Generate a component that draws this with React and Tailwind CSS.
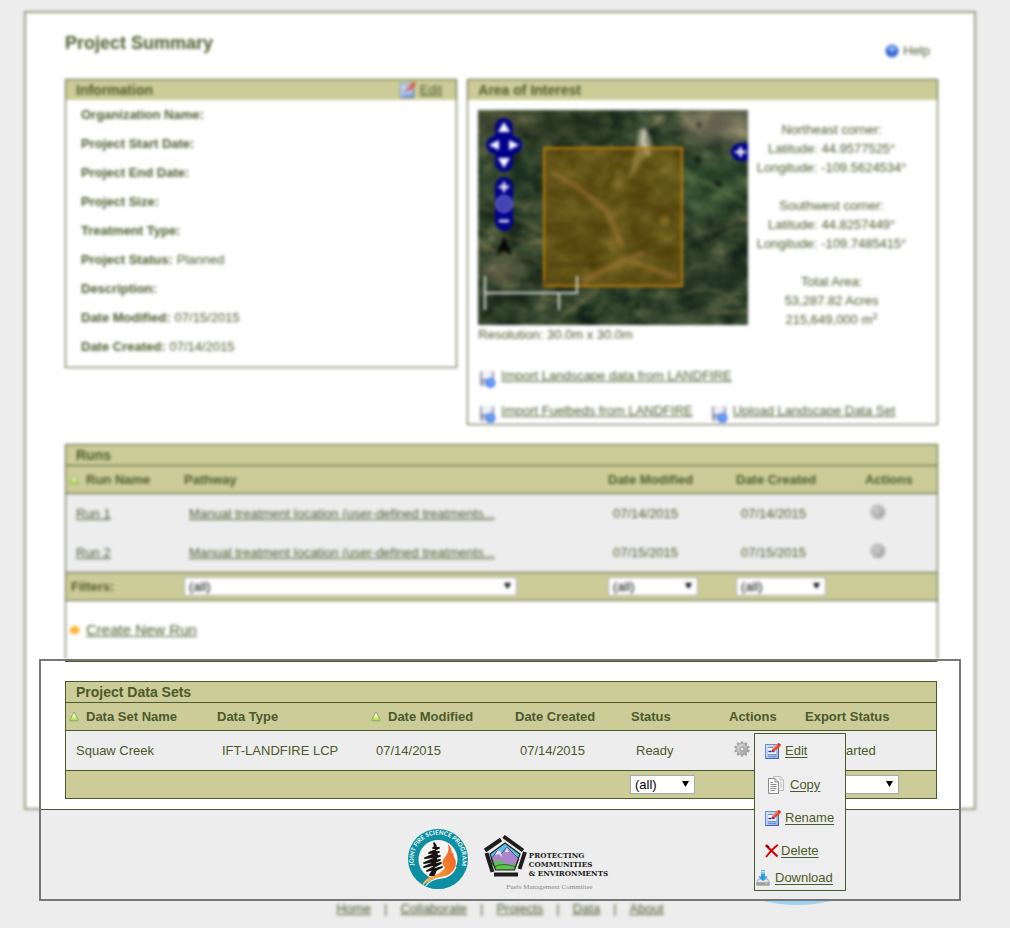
import React from "react";

function SortIcon() {
  return (
    <svg width="10" height="11" viewBox="0 0 10 11" className="shrink-0" aria-hidden="true">
      <defs>
        <linearGradient id="sortFill" x1="0" y1="0" x2="0" y2="1">
          <stop offset="0.3" stopColor="#ffffff" />
          <stop offset="0.8" stopColor="#b9e24f" />
        </linearGradient>
      </defs>
      <path d="M5 1 L9.2 8.6 Q9.5 9.8 8.4 9.8 H1.6 Q.5 9.8 .8 8.6 Z" fill="url(#sortFill)" stroke="#86ab5c" strokeWidth="1" />
    </svg>
  );
}

function EditIcon() {
  return (
    <svg width="16" height="16" viewBox="0 0 16 16" className="shrink-0" aria-hidden="true">
      <defs>
        <linearGradient id="editPage" x1="0" y1="0" x2="1" y2="1">
          <stop offset="0" stopColor="#d5e6fb" />
          <stop offset="1" stopColor="#86aee8" />
        </linearGradient>
      </defs>
      <rect x="0.5" y="1.5" width="13" height="14" fill="url(#editPage)" stroke="#6f8fcb" />
      <path d="M.5 15.5H13.5V3" fill="none" stroke="#4d63a8" />
      <rect x="3" y="4" width="8" height="7" fill="#f2f7ff" />
      <path d="M3 11.500H11M3 13.500H11M3 4.500H8" stroke="#6f8fcb" strokeWidth="1" />
      <path d="M3.500 8.500h3M7.500 8.500h2" stroke="#1c2fb8" strokeWidth="1.600" />
      <path d="M6.600 8.800 L7.400 5.800 L12.600 .8 L15.200 3.400 L9.600 8.200 Z" fill="#e8492a" />
      <path d="M8 6.200 L13 1.600" stroke="#ff9a78" strokeWidth="1" />
      <path d="M12.600 .8 L13.800 0 L16 1.800 L15 3.400 Z" fill="#c92a10" />
      <path d="M6.600 8.800 L7.100 7 L8.400 8.200 Z" fill="#333" />
    </svg>
  );
}

function CopyIcon() {
  return (
    <svg width="18" height="18" viewBox="0 0 18 18" className="shrink-0" aria-hidden="true">
      <path d="M6.500 .5H13l3.500 3.500V14.500H6.500Z" fill="#f4f4f4" stroke="#bdbdbd" />
      <path d="M13 .5V4h3.500M13 7h2M13 9h2M13 11h2" fill="none" stroke="#bdbdbd" />
      <path d="M1.500 2.500H8L11.500 6V17.500H1.500Z" fill="#fafafa" stroke="#8b8b8b" />
      <path d="M8 2.500V6H11.500M3.500 8.500H9.500M3.500 10.500H9.500M3.500 12.500H9.500M3.500 14.500H8M3.500 6.500H6" fill="none" stroke="#8b8b8b" />
    </svg>
  );
}

function DeleteIcon() {
  return (
    <svg width="14" height="14" viewBox="0 0 14 14" className="shrink-0" aria-hidden="true">
      <path d="M1 1.500 L12.500 12.500" stroke="#d40000" strokeWidth="2.200" />
      <path d="M12.800 .8 C8 4.500 4 9 1 13" stroke="#d40000" strokeWidth="1.800" fill="none" />
      <path d="M1 1 L4 3.500" stroke="#8e0000" strokeWidth="2.200" />
    </svg>
  );
}

function DownloadIcon() {
  return (
    <svg width="14" height="16" viewBox="0 0 14 16" className="shrink-0" aria-hidden="true">
      <path d="M2.500 9 L.5 12.500V15.300H13.500V12.500L11.500 9Z" fill="#e2e2e2" stroke="#9a9a9a" strokeWidth=".8" />
      <rect x="1" y="12.300" width="12" height="2.600" fill="#9c9c9c" />
      <rect x="9.500" y="13" width="2" height="1" fill="#a6e86c" />
      <path d="M5 3.500H9V6.500H12L7 11L2 6.500H5Z" fill="#2f9be6" />
      <path d="M5 0H9V1H5ZM5 1.800H9V2.800H5Z" fill="#58b4f0" />
    </svg>
  );
}

const TEETH = [0, 36, 72, 108, 144, 180, 216, 252, 288, 324];

function GearIcon() {
  return (
    <svg width="16" height="16" viewBox="0 0 16 16" className="shrink-0" aria-hidden="true">
      <defs>
        <linearGradient id="gearFill" x1="0" y1="0" x2="1" y2="1">
          <stop offset="0" stopColor="#dedede" />
          <stop offset="1" stopColor="#9d9d9d" />
        </linearGradient>
      </defs>
      {TEETH.map((a) => (
        <rect key={a} x="6.800" y="0.200" width="2.400" height="4" rx="0.600" fill="#a2a2a2" transform={`rotate(${a} 8 8)`} />
      ))}
      <circle cx="8" cy="8" r="5.800" fill="url(#gearFill)" stroke="#999999" strokeWidth=".6" />
      <circle cx="8" cy="8" r="2" fill="#eeeeee" stroke="#8c8c8c" strokeWidth=".8" />
    </svg>
  );
}

function DiskIcon() {
  return (
    <svg width="17" height="18" viewBox="0 0 17 18" className="mt-1 shrink-0" aria-hidden="true">
      <rect x="1" y="1" width="14" height="15" rx="2" fill="#8f93ab" />
      <rect x="3" y="1" width="10" height="8" fill="#f1f1f6" />
      <rect x="4" y="11" width="8" height="5" fill="#c8cbd8" />
      <circle cx="11.500" cy="13" r="5" fill="#4a86ee" />
      <path d="M11.500 10.500V14" fill="none" stroke="#dbe8ff" strokeWidth="1.500" />
    </svg>
  );
}

function HelpIcon() {
  return (
    <svg width="14" height="14" viewBox="0 0 14 14" aria-hidden="true">
      <circle cx="7" cy="7" r="6.500" fill="#2f62d0" />
      <ellipse cx="7" cy="4.500" rx="4.500" ry="3" fill="#6f9cf0" />
      <path d="M5.500 5.500Q5.500 4 7 4T8.500 5.400Q8.500 6.500 7 7.500V8.500M7 9.800V11" stroke="#cfe0ff" strokeWidth="1" fill="none" />
    </svg>
  );
}

function TerrainMap() {
  return (
    <svg viewBox="0 0 270 215" className="block h-[215px] w-[270px] shrink-0" role="img" aria-label="Satellite map of the area of interest">
      <defs>
        <filter id="terrain" x="0" y="0" width="100%" height="100%" colorInterpolationFilters="sRGB">
          <feTurbulence type="fractalNoise" baseFrequency="0.040 0.055" numOctaves="5" seed="7" />
          <feColorMatrix values="1.300 .3 0 0 -.38  1.300 .3 0 0 -.38  1.300 .3 0 0 -.38  0 0 0 0 1" />
          <feComponentTransfer>
            <feFuncR type="table" tableValues=".08 .12 .19 .27 .40 .56" />
            <feFuncG type="table" tableValues=".13 .18 .26 .33 .42 .55" />
            <feFuncB type="table" tableValues=".09 .12 .17 .22 .29 .42" />
          </feComponentTransfer>
        </filter>
        <filter id="soft" x="-30%" y="-30%" width="160%" height="160%">
          <feGaussianBlur stdDeviation="7" />
        </filter>
        <filter id="softer">
          <feGaussianBlur stdDeviation="1.500" />
        </filter>
        <clipPath id="mapClip">
          <rect width="270" height="215" />
        </clipPath>
      </defs>
      <g clipPath="url(#mapClip)">
        <rect width="270" height="215" fill="#374430" />
        <rect width="270" height="215" filter="url(#terrain)" />
        <g filter="url(#soft)">
          <ellipse cx="242" cy="14" rx="40" ry="18" fill="#b09c86" opacity=".5" />
          <ellipse cx="230" cy="75" rx="40" ry="30" fill="#3a6238" opacity=".4" />
          <ellipse cx="90" cy="18" rx="40" ry="16" fill="#1f2d1b" opacity=".5" />
          <ellipse cx="30" cy="70" rx="28" ry="12" fill="#1c3420" opacity=".5" />
          <ellipse cx="225" cy="165" rx="50" ry="22" fill="#1d2f20" opacity=".5" />
          <ellipse cx="22" cy="160" rx="20" ry="10" fill="#9c8468" opacity=".5" />
          <ellipse cx="20" cy="14" rx="30" ry="14" fill="#66583c" opacity=".4" />
        </g>
        <g filter="url(#softer)" fill="none">
          <path d="M0 98Q35 102 64 122M0 118Q40 132 68 134M0 138Q38 145 64 152" stroke="#8a7448" strokeWidth="2" opacity=".5" />
          <path d="M0 108Q45 118 68 127M5 205Q50 168 100 195" stroke="#13200f" strokeWidth="3" opacity=".5" />
          <path d="M178 145Q215 142 230 130T270 113" stroke="#14180f" strokeWidth="2" opacity=".8" />
          <path d="M207 168Q215 145 240 160M205 185Q235 170 262 195" stroke="#7b7951" strokeWidth="2" opacity=".5" />
          <path d="M205 58L222 70L242 80L270 95" stroke="#7a8a50" strokeWidth="2" opacity=".5" />
          <path d="M233 202H270M85 205L120 180" stroke="#8b7b50" strokeWidth="3" opacity=".5" />
          <path d="M218 48l4 4M238 72l5 5M220 14l2 2" stroke="#080c08" strokeWidth="4" />
          <path d="M159 33Q158 18 167 17Q176 30 173 44L164 50L150 72Q156 48 159 33Z" fill="#9ea284" opacity=".8" />
          <path d="M166 20L165 32L171 46" stroke="#e8ded2" strokeWidth="3" />
        </g>
        <rect x="66" y="38" width="138" height="138" fill="#8f6400" fillOpacity=".5" stroke="#bd7d08" strokeWidth="2" />
        <g filter="url(#softer)" fill="none" opacity=".4">
          <path d="M74 62L98 76L128 100L145 138M104 172L130 158L166 142M150 150L200 168" stroke="#b98343" strokeWidth="6" />
          <path d="M70 155H118M68 115Q85 112 94 118" stroke="#3a2c00" strokeWidth="5" />
          <path d="M82 140Q95 120 115 130T105 150Q90 150 82 140" stroke="#4d3900" strokeWidth="3" />
          <path d="M150 96Q170 92 190 105M130 48Q140 65 126 80" stroke="#443500" strokeWidth="4" />
          <circle cx="187" cy="111" r="5" fill="#c5964c" />
        </g>
        <g fill="#00008b">
          <rect x="17" y="8" width="18" height="54" rx="9" />
          <rect x="8" y="26" width="36" height="18" rx="9" />
          <rect x="17" y="67" width="18" height="54" rx="9" />
          <path d="M270 33H262A9 9 0 0 0 262 51H270Z" />
        </g>
        <path d="M26 12L32 22H20ZM26 58L32 48H20ZM11 35L21 30V40ZM41 35L31 30V40Z" fill="#fff" />
        <circle cx="26" cy="94" r="8.500" fill="#4644b4" stroke="#8381d8" />
        <path d="M21 77H31M26 72V82M21 111H31M257 42H268M262.500 37V47" stroke="#fff" strokeWidth="2.600" />
        <path d="M26 126L34 146L26 140L18 146Z" fill="#050805" />
        <path d="M7 166V200M7 183H99V166M81 183V200" fill="none" stroke="#d5d5d5" strokeWidth="2" />
        <text x="41" y="177" fontSize="10" fill="#22251f" fontFamily="Liberation Sans">10 km</text>
        <text x="33" y="197" fontSize="10" fill="#22251f" fontFamily="Liberation Sans">5 mi</text>
      </g>
    </svg>
  );
}

function FireScienceLogo() {
  return (
    <svg width="60" height="60" viewBox="0 0 60 60" role="img" aria-label="Joint Fire Science Program">
      <defs>
        <path id="ring" d="M12.700 47.200A24.400 24.400 0 1 1 47.300 47.200" />
        <linearGradient id="flame" x1="1" y1="0" x2="0" y2="1">
          <stop offset="0" stopColor="#f0552b" />
          <stop offset=".55" stopColor="#f58a2e" />
          <stop offset="1" stopColor="#fdc66b" />
        </linearGradient>
        <clipPath id="disc">
          <circle cx="30" cy="30" r="30" />
        </clipPath>
      </defs>
      <circle cx="30" cy="30" r="30" fill="#0d8fa3" />
      <circle cx="30" cy="30.500" r="19.500" fill="#f4f4f1" />
      <g clipPath="url(#disc)">
        <path d="M13 60Q20 51 34 49Q46 46 50 34L56 44L44 60Z" fill="#0d8fa3" />
        <path d="M14 57Q16 50 24 47Q34 44 37 39Q32 34 37 28Q42 23 40 15Q44 19 43.500 24Q46 23 45.500 27Q50 34 46 41Q42 47 33 48Q22 50 14 57Z" fill="url(#flame)" />
        <path d="M17 58Q22 50 33 49Q44 48 48 38" fill="none" stroke="#fff" strokeWidth="1.200" />
      </g>
      <path d="M26 14L28 17L25 19L31 19L21 24L31 23L17 29L32 27L16 34L32 31L16 38L33 34L19 42L34 38L28 41L26 46H22L25 41L29 26Z" fill="#15120f" stroke="#15120f" strokeWidth="1.800" strokeLinejoin="round" />
      <text fontSize="6" fontWeight="700" fontFamily="Lato, 'Liberation Sans', sans-serif" fill="#fff" textAnchor="middle">
        <textPath href="#ring" startOffset="50%">JOINT FIRE SCIENCE PROGRAM</textPath>
      </text>
    </svg>
  );
}

function PentagonLogo() {
  return (
    <svg width="44" height="42" viewBox="0 0 44 42" role="img" aria-label="Protecting Communities and Environments emblem">
      <path d="M22 8L37 19L31.500 35H12.500L7 19Z" fill="#52c3e8" />
      <path d="M8 24L15 15L18 19L24 12L36 24L32.500 32L10 30Z" fill="#a986c8" stroke="#3a2a4c" strokeWidth=".7" />
      <path d="M15 15L12 20L16 19L19 22L18 17ZM24 12L22 17L26 17Z" fill="#e8dcf2" />
      <path d="M9.500 27Q17 24 23 29T34 26L31.500 35H12.500Z" fill="#5fc24b" />
      <path d="M11 32Q20 27 33 32" fill="none" stroke="#2a6c2c" strokeWidth="1" />
      <path d="M22 8L37 19L31.500 35H12.500L7 19Z" fill="none" stroke="#1d1d1d" strokeWidth="1.200" />
      <path d="M18 4.500L2 15.500M20.500 1.500L40 15.500M42 17L36.500 34M35 39.500H11M3.500 18L9.500 37" fill="none" stroke="#1d1d1d" strokeWidth="4" />
    </svg>
  );
}

function Select({ label, width }) {
  return (
    <span className={`relative inline-flex align-middle ${width}`}>
      <select aria-label={label} className="h-[19px] w-full appearance-none border border-[#a9a9a9] bg-white pl-1 text-[13px] leading-4 text-black outline-none">
        <option>(all)</option>
      </select>
      <svg width="7" height="6" viewBox="0 0 7 6" className="pointer-events-none absolute top-1.5 right-1.5" aria-hidden="true">
        <path d="M0 0H7L3.500 6Z" fill="#000" />
      </svg>
    </span>
  );
}

function PanelTitle({ children }) {
  return <h2 className="text-[14px] leading-5 font-bold">{children}</h2>;
}

const INFO = [
  ["Organization Name:", ""],
  ["Project Start Date:", ""],
  ["Project End Date:", ""],
  ["Project Size:", ""],
  ["Treatment Type:", ""],
  ["Project Status:", "Planned"],
  ["Description:", ""],
  ["Date Modified:", "07/15/2015"],
  ["Date Created:", "07/14/2015"],
];

const RUNS = [
  ["Run 1", "07/14/2015"],
  ["Run 2", "07/15/2015"],
];

const NAV = ["Home", "Collaborate", "Projects", "Data", "About"];

const CELL_HEAD = "border-b border-[#4b5a2a] p-0 text-left font-bold";
const TH_FIRST = `${CELL_HEAD} pl-[3px]`;
const TH = `${CELL_HEAD} pl-1`;
const TD = "p-0 pl-[9px]";

function IconLink({ icon, children }) {
  return (
    <a href="#" className="flex h-[23px] items-start gap-[5px]">
      {icon}
      <span className="leading-5 underline">{children}</span>
    </a>
  );
}

function InformationPanel() {
  return (
    <section className="border border-[#4b5a2a] pb-1.5">
      <div className="flex items-center justify-between bg-[#cccc99] pr-3.5 pl-2.5">
        <PanelTitle>Information</PanelTitle>
        <a href="#" className="flex items-center gap-1 underline">
          <EditIcon />
          Edit
        </a>
      </div>
      <dl className="pl-[15px]">
        {INFO.map(([k, v]) => (
          <div key={k} className="flex h-[29px] items-center gap-1">
            <dt className="font-bold">{k}</dt>
            <dd>{v}</dd>
          </div>
        ))}
      </dl>
    </section>
  );
}

function AreaPanel() {
  return (
    <section className="border border-[#4b5a2a]">
      <div className="bg-[#cccc99] pl-2.5">
        <PanelTitle>Area of Interest</PanelTitle>
      </div>
      <div className="flex pt-2.5 pl-2.5">
        <div>
          <TerrainMap />
          <p className="leading-5">Resolution: 30.0m x 30.0m</p>
        </div>
        <div className="flex flex-1 flex-col gap-[19px] pt-2.5 pr-[22px] text-center leading-[19px] whitespace-nowrap">
          <p>Northeast corner:<br />Latitude: 44.9577525°<br />Longitude: -109.5624534°</p>
          <p>Southwest corner:<br />Latitude: 44.8257449°<br />Longitude: -109.7485415°</p>
          <p>Total Area:<br />53,287.82 Acres<br />215,649,000 m<sup>2</sup></p>
        </div>
      </div>
      <div className="mt-[21px] flex flex-col gap-3 pl-[11px]">
        <IconLink icon={<DiskIcon />}>Import Landscape data from LANDFIRE</IconLink>
        <div className="flex gap-[18px]">
          <IconLink icon={<DiskIcon />}>Import Fuelbeds from LANDFIRE</IconLink>
          <IconLink icon={<DiskIcon />}>Upload Landscape Data Set</IconLink>
        </div>
      </div>
    </section>
  );
}

function RunsPanel() {
  return (
    <section className="mt-[19px] border-x border-t border-[#4b5a2a]">
      <div className="border-b border-[#4b5a2a] bg-[#cccc99] pl-2.5">
        <PanelTitle>Runs</PanelTitle>
      </div>
      <table className="w-full table-fixed border-separate border-spacing-0">
        <colgroup>
          <col className="w-[114px]" />
          <col />
          <col className="w-[128px]" />
          <col className="w-[129px]" />
          <col className="w-[76px]" />
        </colgroup>
        <thead>
          <tr className="h-7 bg-[#cccc99]">
            <th className={TH_FIRST}>
              <span className="flex items-center gap-[7px]"><SortIcon />Run Name</span>
            </th>
            <th className={TH}>Pathway</th>
            <th className={TH}>Date Modified</th>
            <th className={TH}>Date Created</th>
            <th className={TH}>Actions</th>
          </tr>
        </thead>
        <tbody>
          {RUNS.map(([name, date]) => (
            <tr key={name} className="h-[39px] bg-[#ededed]">
              <td className="p-0 pl-2.5"><a href="#" className="underline">{name}</a></td>
              <td className={TD}><a href="#" className="underline">Manual treatment location (user-defined treatments...</a></td>
              <td className={TD}>{date}</td>
              <td className={TD}>{date}</td>
              <td className={TD}>
                <button type="button" aria-label={`Actions for ${name}`} className="block pb-1"><GearIcon /></button>
              </td>
            </tr>
          ))}
        </tbody>
        <tfoot>
          <tr className="h-[29px] bg-[#cccc99]">
            <th className="border-y border-[#4b5a2a] p-0 pl-[5px] text-left font-bold">Filters:</th>
            <td className="border-y border-[#4b5a2a] p-0 pl-1"><Select label="Filter by pathway" width="w-[333px]" /></td>
            <td className="border-y border-[#4b5a2a] p-0 pl-1"><Select label="Filter by date modified" width="w-[90px]" /></td>
            <td className="border-y border-[#4b5a2a] p-0 pl-1"><Select label="Filter by date created" width="w-[90px]" /></td>
            <td className="border-y border-[#4b5a2a] p-0" />
          </tr>
        </tfoot>
      </table>
      <div className="flex h-[58px] items-center gap-[5px] pl-[3px]">
        <svg width="12" height="12" viewBox="0 0 12 12" aria-hidden="true">
          <path d="M1 4H6V1L11.500 6L6 11V9H1Z" fill="#f5a81c" />
          <circle cx="6" cy="6" r="4" fill="#fbb62c" />
        </svg>
        <a href="#" className="text-[15px] underline">Create New Run</a>
      </div>
    </section>
  );
}

function MenuItem({ icon, inset, gap, height, children }) {
  return (
    <li>
      <a href="#" className={`flex items-center ${inset} ${gap} ${height}`}>
        {icon}
        <span className="underline underline-offset-2">{children}</span>
      </a>
    </li>
  );
}

function ActionsMenu() {
  return (
    <ul className="absolute top-0.5 left-[29px] z-10 w-[92px] border border-[#4b5a2a] bg-[#eeeeee] pb-px">
      <MenuItem icon={<EditIcon />} inset="pl-2.5" gap="gap-1" height="h-[34px]">Edit</MenuItem>
      <MenuItem icon={<CopyIcon />} inset="pl-3" gap="gap-[5px]" height="h-[33px]">Copy</MenuItem>
      <MenuItem icon={<EditIcon />} inset="pl-2.5" gap="gap-1" height="h-[33px]">Rename</MenuItem>
      <MenuItem icon={<DeleteIcon />} inset="pl-2.5" gap="gap-0.5" height="h-[33px]">Delete</MenuItem>
      <MenuItem icon={<DownloadIcon />} inset="pl-px" gap="gap-[5px]" height="h-[22px]">Download</MenuItem>
    </ul>
  );
}

function DataSetsPanel() {
  const foot = "border-t border-[#4b5a2a] p-0 pl-[3px]";
  return (
    <section className="border border-[#4b5a2a]">
      <div className="border-b border-[#4b5a2a] bg-[#cccc99] pl-2.5">
        <PanelTitle>Project Data Sets</PanelTitle>
      </div>
      <table className="w-full table-fixed border-separate border-spacing-0">
        <colgroup>
          <col className="w-[147px]" />
          <col />
          <col className="w-[144px]" />
          <col className="w-[116px]" />
          <col className="w-[98px]" />
          <col className="w-[76px]" />
          <col className="w-[135px]" />
        </colgroup>
        <thead>
          <tr className="h-7 bg-[#cccc99]">
            <th className={TH_FIRST}>
              <span className="flex items-center gap-[7px]"><SortIcon />Data Set Name</span>
            </th>
            <th className={TH}>Data Type</th>
            <th className={TH}>
              <span className="flex items-center gap-[7px]"><SortIcon />Date Modified</span>
            </th>
            <th className={TH}>Date Created</th>
            <th className={TH}>Status</th>
            <th className={TH}>Actions</th>
            <th className={TH}>Export Status</th>
          </tr>
        </thead>
        <tbody>
          <tr className="h-[39px] bg-[#ededed]">
            <td className="p-0 pl-2.5">Squaw Creek</td>
            <td className={TD}>IFT-LANDFIRE LCP</td>
            <td className={TD}>07/14/2015</td>
            <td className={TD}>07/14/2015</td>
            <td className={TD}>Ready</td>
            <td className={`relative ${TD}`}>
              <button type="button" aria-label="Actions for Squaw Creek" aria-expanded="true" className="block pb-1"><GearIcon /></button>
              <ActionsMenu />
            </td>
            <td className={TD}>Not Started</td>
          </tr>
        </tbody>
        <tfoot>
          <tr className="h-7 bg-[#cccc99]">
            <td className={foot} colSpan={4} />
            <td className={foot}><Select label="Filter by status" width="w-[65px]" /></td>
            <td className={foot} />
            <td className={foot}><Select label="Filter by export status" width="w-[95px]" /></td>
          </tr>
        </tfoot>
      </table>
    </section>
  );
}

export default function App() {
  return (
    <div className="min-h-screen bg-[#ededed] pt-[11px] pr-[34px] pl-6 font-['Liberation_Sans',Arial,sans-serif] text-[13px] leading-4 text-[#4b5a2a]">
      <div className="relative">
        <div className="absolute inset-x-0 top-0 bottom-[91px] border-2 border-[#4b5a2a]/60 bg-white [filter:blur(1px)_blur(1px)]" />

        <main className="relative pr-[38px] pl-[41px] [filter:blur(1px)_blur(1px)]">
          <header className="flex h-[68px] items-start justify-between pr-2">
            <h1 className="pt-5 text-[18px] leading-6 font-bold">Project Summary</h1>
            <a href="#" className="flex items-center gap-1 pt-[30px] leading-5">
              <HelpIcon />
              Help
            </a>
          </header>
          <div className="grid grid-cols-[5fr_6fr] items-start gap-2.5">
            <InformationPanel />
            <AreaPanel />
          </div>
          <RunsPanel />
        </main>

        <div className="relative mx-[15px] border-2 border-[#777777] bg-[#ededed]">
          <div className="border-b border-[#4b5a2a] bg-white pr-[22px] pb-2.5 pl-6">
            <div className="mb-[19px] h-px bg-[#4b5a2a]" />
            <DataSetsPanel />
          </div>
          <div className="flex h-[89px] items-start justify-center gap-[15px] pt-[19px] pl-4">
            <FireScienceLogo />
            <div className="pt-1">
              <div className="flex items-center gap-0.5">
                <PentagonLogo />
                <p className="pt-[18px] font-['DejaVu_Serif_Condensed','DejaVu_Serif',serif] text-[8px] leading-[9px] font-bold whitespace-nowrap text-[#1d1d1d]">
                  PROTECTING<br />COMMUNITIES<br />&amp; ENVIRONMENTS
                </p>
              </div>
              <p className="pt-1 pl-2 text-center font-['Liberation_Serif',serif] text-[7px] leading-[10px] text-[#8a8a8a]">Fuels Management Committee</p>
            </div>
          </div>
        </div>

        <svg width="70" height="5" viewBox="0 0 70 5" className="absolute top-full right-[144px]" aria-hidden="true">
          <path d="M1 0Q35 8 69 0Z" fill="#9fd2f5" />
        </svg>
      </div>

      <nav className="flex justify-center gap-[13px] pb-2.5 [filter:blur(1px)_blur(1px)]">
        {NAV.map((item, i) => (
          <React.Fragment key={item}>
            {i > 0 && <span aria-hidden="true">|</span>}
            <a href="#" className="underline">{item}</a>
          </React.Fragment>
        ))}
      </nav>
    </div>
  );
}
